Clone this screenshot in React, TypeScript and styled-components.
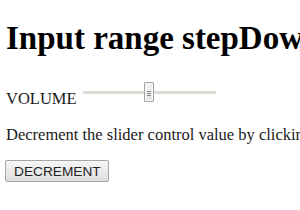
import React, { useState } from 'react';
import styled, { createGlobalStyle } from 'styled-components';

const GlobalStyle = createGlobalStyle`
  html, body {
    margin: 0;
    padding: 0;
    background: #fff;
  }
  body {
    font-family: "Liberation Serif", "Times New Roman", serif;
    color: #111;
    overflow: hidden;
  }
`;

const Page = styled.div`
  padding: 0 6px;
  width: 300px;
  box-sizing: border-box;
  white-space: nowrap;
`;

const Title = styled.h1`
  font-size: 33px;
  line-height: 38px;
  font-weight: bold;
  color: #000;
  margin: 19px 0 25px;
`;

const Row = styled.div`
  display: flex;
  align-items: flex-end;
`;

const Label = styled.span`
  font-size: 16.5px;
  line-height: 19px;
  color: #1a1a1a;
`;

const Range = styled.input`
  -webkit-appearance: none;
  appearance: none;
  width: 133px;
  height: 20px;
  margin: 0 0 6px 6px;
  padding: 0;
  background: transparent;
  outline: none;

  &::-webkit-slider-runnable-track {
    height: 3px;
    background: #dcdcd5;
  }

  &::-webkit-slider-thumb {
    -webkit-appearance: none;
    width: 10px;
    height: 20px;
    margin-top: -9px;
    box-sizing: border-box;
    border: 1px solid #a3a3a3;
    border-radius: 1px;
    box-shadow: inset 0 0 0 1px #f9f9f9;
    background:
      linear-gradient(#8c8c8c, #8c8c8c) center 8px / 4px 1px no-repeat,
      linear-gradient(#8c8c8c, #8c8c8c) center 10px / 4px 1px no-repeat,
      linear-gradient(#8c8c8c, #8c8c8c) center 12px / 4px 1px no-repeat,
      linear-gradient(#f4f4f2, #e4e4e1);
  }
`;

const Text = styled.p`
  font-size: 16.5px;
  line-height: 19px;
  margin: 17px 0 16px;
  color: #1a1a1a;
`;

const Button = styled.button`
  font-family: "Liberation Sans", Arial, sans-serif;
  font-size: 13.7px;
  color: #222;
  height: 22px;
  padding: 1px 7px 0 8px;
  margin-left: -1px;
  border: 1px solid #a6a6a6;
  border-radius: 2px;
  background: linear-gradient(#f6f6f6, #dedede);
  cursor: pointer;
`;

export default function App() {
  const [volume, setVolume] = useState(50);
  return (
    <Page>
      <GlobalStyle />
      <Title>Input range stepDown() Method</Title>
      <Row>
        <Label>VOLUME</Label>
        <Range
          type="range"
          min={0}
          max={100}
          value={volume}
          onChange={(e) => setVolume(Number(e.target.value))}
        />
      </Row>
      <Text>Decrement the slider control value by clicking the button.</Text>
      <Button onClick={() => setVolume((v) => Math.max(0, v - 1))}>DECREMENT</Button>
    </Page>
  );
}
